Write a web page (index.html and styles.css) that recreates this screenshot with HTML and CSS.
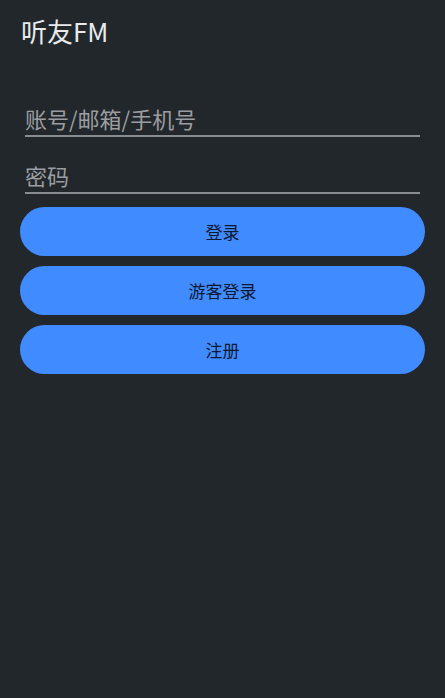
FILE: index.html
```html
<!DOCTYPE html>
<html lang="zh-CN">
<head>
    <meta charset="UTF-8">
    <title>听友FM</title>
    <link rel="stylesheet" href="styles.css">
</head>
<body>
    <h1 class="title">听友FM</h1>
    <form class="login-form">
        <input class="field" type="text" placeholder="账号/邮箱/手机号">
        <input class="field" type="password" placeholder="密码">
        <button class="btn" type="submit">登录</button>
        <button class="btn" type="button">游客登录</button>
        <button class="btn" type="button">注册</button>
    </form>
</body>
</html>
```

FILE: styles.css
```css
html, body {
    height: 100%;
}
body {
    margin: 0;
    background: #22272b;
    font-family: "Noto Sans CJK SC", "Noto Sans", sans-serif;
}
.title {
    margin: 0;
    padding: 12px 21px 0;
    font-size: 26px;
    font-weight: normal;
    line-height: 38px;
    color: #e8eaec;
}
.login-form {
    display: flex;
    flex-direction: column;
    padding: 50px 20px 0;
}
.field {
    margin: 0 5px 20px;
    padding: 0;
    height: 35px;
    background: transparent;
    border: none;
    border-bottom: 2px solid #8a8d90;
    font-family: inherit;
    font-size: 22px;
    color: #e8eaec;
    outline: none;
}
.field + .field {
    margin-bottom: 13px;
}
.field::placeholder {
    color: #9b9ea1;
}
.btn {
    height: 49px;
    margin-bottom: 10px;
    background: #3f8bff;
    border: none;
    border-radius: 25px;
    font-family: inherit;
    font-size: 17px;
    color: #101830;
    cursor: pointer;
}
```
